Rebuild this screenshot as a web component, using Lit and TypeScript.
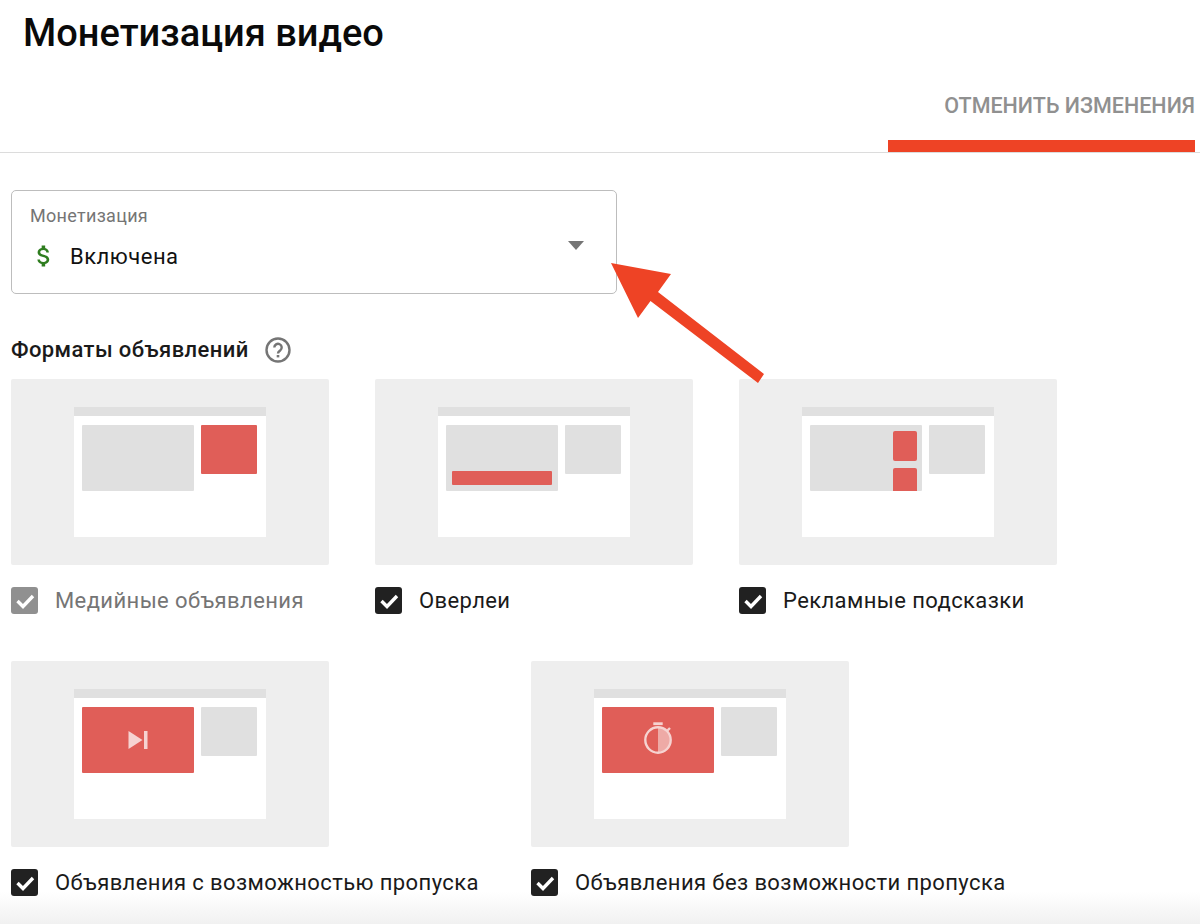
import { LitElement, html, css, svg } from "lit";
import { customElement } from "lit/decorators.js";

type Kind = "display" | "overlay" | "cards" | "skip" | "noskip";

@customElement("app-root")
export class AppRoot extends LitElement {
  static styles = css`
    :host {
      display: block;
      position: relative;
      width: 1200px;
      height: 924px;
      overflow: hidden;
      background: #fff;
      font-family: Roboto, "Noto Sans", sans-serif;
      color: #111;
    }
    .head {
      height: 152px;
      border-bottom: 1px solid #dcdcdc;
      display: flex;
      flex-direction: column;
      box-sizing: content-box;
    }
    h1 {
      margin: 0;
      padding: 12px 0 0 23px;
      font-size: 38px;
      line-height: 42px;
      font-weight: 500;
      color: #0a0a0a;
    }
    .tabs {
      margin-top: auto;
      display: flex;
      justify-content: flex-end;
      padding-right: 5px;
    }
    .tab {
      width: 307px;
      display: flex;
      flex-direction: column;
      align-items: flex-end;
    }
    .tab span {
      font-size: 21.5px;
      line-height: 24px;
      font-weight: 500;
      color: #909090;
      white-space: nowrap;
      margin-bottom: 22px;
    }
    .tab i {
      display: block;
      width: 100%;
      height: 12px;
      background: #ee4325;
    }
    .body {
      position: relative;
      padding: 37px 0 0 11px;
    }
    .select {
      box-sizing: border-box;
      width: 606px;
      height: 104px;
      border: 1px solid #bdbdbd;
      border-radius: 5px;
      padding: 15px 18px 0;
      position: relative;
    }
    .select label {
      display: block;
      font-size: 18px;
      line-height: 20px;
      color: #757575;
      letter-spacing: 0.3px;
    }
    .value {
      display: flex;
      align-items: center;
      margin-top: 16px;
      height: 28px;
      font-size: 22px;
      letter-spacing: 0.5px;
    }
    .value svg {
      width: 28px;
      height: 28px;
      margin-right: 12px;
      flex: none;
    }
    .caret {
      position: absolute;
      right: 32px;
      top: 50px;
      width: 0;
      height: 0;
      border-left: 8px solid transparent;
      border-right: 8px solid transparent;
      border-top: 9px solid #757575;
    }
    h2 {
      margin: 40px 0 0;
      display: flex;
      align-items: center;
      height: 32px;
      font-size: 22px;
      letter-spacing: 0.4px;
      line-height: 32px;
      font-weight: 500;
      color: #1a1a1a;
    }
    h2 svg {
      width: 26px;
      height: 26px;
      margin-left: 16px;
    }
    .row {
      display: flex;
      margin-top: 13px;
    }
    .row + .row {
      margin-top: 47px;
    }
    .item {
      margin-right: 46px;
    }
    .row + .row .item:first-child {
      margin-right: 0;
      width: 520px;
    }
    .card {
      box-sizing: border-box;
      width: 318px;
      height: 186px;
      background: #eeeeee;
      border-radius: 2px;
      padding: 28px 63px;
    }
    .page {
      height: 130px;
      background: #fff;
      display: flex;
      flex-direction: column;
    }
    .bar {
      height: 9px;
      background: #e0e0e0;
    }
    .cols {
      display: flex;
      gap: 7px;
      padding: 9px 8px 0;
      align-items: flex-start;
    }
    .main {
      box-sizing: border-box;
      width: 112px;
      height: 66px;
      background: #e0e0e0;
      border-radius: 1px;
      display: flex;
      overflow: hidden;
    }
    .side {
      width: 56px;
      height: 49px;
      background: #e0e0e0;
      border-radius: 1px;
    }
    .side.red {
      background: #e05e58;
    }
    .main.red {
      background: #e05e58;
      align-items: center;
      justify-content: center;
    }
    .main.overlay {
      align-items: flex-end;
      padding: 0 6px 6px;
    }
    .ov {
      width: 100%;
      height: 14px;
      background: #e05e58;
      border-radius: 1px;
    }
    .main.cards {
      flex-direction: column;
      align-items: flex-end;
      padding: 6px 5px 0 0;
      gap: 7px;
    }
    .tip {
      width: 24px;
      height: 30px;
      flex: none;
      background: #e05e58;
      border-radius: 2px;
    }
    .check {
      display: flex;
      align-items: center;
      margin-top: 22px;
      height: 27px;
      font-size: 22px;
      letter-spacing: 0.4px;
      white-space: nowrap;
      color: #1a1a1a;
    }
    .box {
      box-sizing: border-box;
      width: 27px;
      height: 27px;
      border-radius: 3px;
      background: #212121;
      margin-right: 17px;
      flex: none;
      display: flex;
    }
    .box svg {
      width: 27px;
      height: 27px;
    }
    .off {
      color: #757575;
    }
    .off .box {
      background: #909090;
    }
    .fade {
      position: absolute;
      left: 0;
      right: 0;
      bottom: 0;
      height: 32px;
      background: linear-gradient(#ffffff, #f1f1f1);
      pointer-events: none;
    }
    .arrow {
      position: absolute;
      left: 0;
      top: 0;
      width: 1200px;
      height: 924px;
      pointer-events: none;
    }
  `;

  private thumb(kind: Kind) {
    let main;
    if (kind === "display") main = html`<div class="main"></div>`;
    if (kind === "overlay")
      main = html`<div class="main overlay"><div class="ov"></div></div>`;
    if (kind === "cards")
      main = html`<div class="main cards"><div class="tip"></div><div class="tip"></div></div>`;
    if (kind === "skip")
      main = html`<div class="main red">
        <svg width="20" height="18" viewBox="0 0 20 18">
          <path d="M0.5 0L14.5 9L0.5 18Z" fill="#f6d3d1" />
          <rect x="16" y="0" width="3.5" height="18" fill="#f6d3d1" />
        </svg>
      </div>`;
    if (kind === "noskip")
      main = html`<div class="main red">
        <svg width="32" height="40" viewBox="0 0 32 40">
          <rect x="11.3" y="2.3" width="9.4" height="2.8" fill="#f6d3d1" />
          <path d="M16 7.3a12.7 12.7 0 0 1 0 25.4Z" fill="#f6d3d1" opacity=".65" />
          <circle cx="16" cy="20" r="12.7" fill="none" stroke="#f6d3d1" stroke-width="2.4" />
          <path d="M25 11L28 8" stroke="#f6d3d1" stroke-width="2.4" />
        </svg>
      </div>`;
    return html`<div class="card">
      <div class="page">
        <div class="bar"></div>
        <div class="cols">
          ${main}
          <div class="side ${kind === "display" ? "red" : ""}"></div>
        </div>
      </div>
    </div>`;
  }

  private item(kind: Kind, label: string, off = false) {
    return html`<div class="item">
      ${this.thumb(kind)}
      <div class="check ${off ? "off" : ""}">
        <span class="box">
          <svg viewBox="0 0 27 27">
            <path d="M6.5 14L12 19.5L22 9" fill="none" stroke="#fff" stroke-width="3.4" />
          </svg>
        </span>
        ${label}
      </div>
    </div>`;
  }

  render() {
    return html`
      <div class="fade"></div>
      <div class="head">
        <h1>Монетизация видео</h1>
        <div class="tabs">
          <div class="tab"><span>ОТМЕНИТЬ ИЗМЕНЕНИЯ</span><i></i></div>
        </div>
      </div>
      <div class="body">
        <div class="select">
          <label>Монетизация</label>
          <div class="value">
            <svg viewBox="0 0 24 24">
              <path
                fill="#2e7d1f"
                d="M11.8 10.9c-2.27-.59-3-1.2-3-2.15 0-1.09 1.01-1.85 2.7-1.85 1.78 0 2.44.85 2.5 2.1h2.21c-.07-1.72-1.12-3.3-3.21-3.81V3h-3v2.16c-1.94.42-3.5 1.68-3.5 3.61 0 2.31 1.91 3.46 4.7 4.13 2.5.6 3 1.48 3 2.41 0 .69-.49 1.79-2.7 1.79-2.06 0-2.87-.92-2.98-2.1h-2.2c.12 2.19 1.76 3.42 3.68 3.83V21h3v-2.15c1.95-.37 3.5-1.5 3.5-3.55 0-2.84-2.43-3.81-4.7-4.4z"
              />
            </svg>
            Включена
          </div>
          <div class="caret"></div>
        </div>
        <h2>
          Форматы объявлений
          <svg viewBox="0 0 26 26">
            <circle cx="13" cy="13" r="11.5" fill="none" stroke="#757575" stroke-width="2.4" />
            <path
              d="M9.3 10.5a3.7 3.7 0 1 1 5.9 3c-1.3 1-2.2 1.5-2.2 3"
              fill="none"
              stroke="#757575"
              stroke-width="2.4"
            />
            <rect x="11.7" y="18" width="2.6" height="2.4" fill="#757575" />
          </svg>
        </h2>
        <div class="row">
          ${this.item("display", "Медийные объявления", true)}
          ${this.item("overlay", "Оверлеи")}
          ${this.item("cards", "Рекламные подсказки")}
        </div>
        <div class="row">
          ${this.item("skip", "Объявления с возможностью пропуска")}
          ${this.item("noskip", "Объявления без возможности пропуска")}
        </div>
      </div>
      <svg class="arrow" viewBox="0 0 1200 924">
        ${svg`<path fill="#ee4325" d="M611 263L671 274L658 292L764 374L758 383L650.5 301L638 318Z" />`}
      </svg>
    `;
  }
}
